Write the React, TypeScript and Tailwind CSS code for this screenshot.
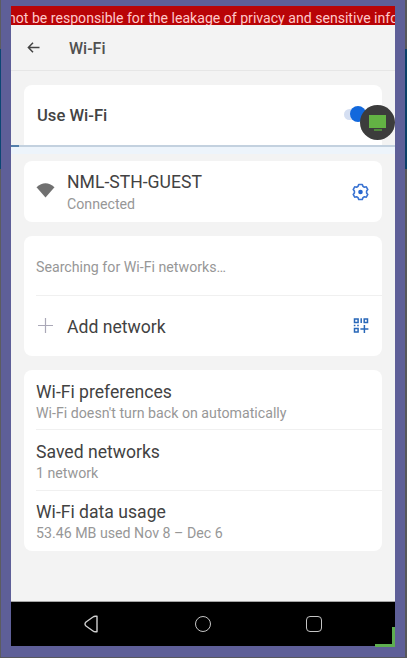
import type { ReactNode } from 'react';

function Text({ children, className }: { children: ReactNode; className: string }) {
  return <div className={`whitespace-nowrap ${className}`}>{children}</div>;
}

const title = 'text-[17.6px] leading-5 text-[#424242]';
const note = 'text-[14.2px] leading-4 text-[#979797]';

function BackArrow() {
  return (
    <svg className="h-4 w-4" viewBox="0 0 16 16" fill="none" stroke="#444" strokeWidth="1.5">
      <path d="M13.5 7.5H2.5M7 2.8 2.4 7.5 7 12.2" />
    </svg>
  );
}

function Gear() {
  return (
    <svg className="h-[18px] w-[18px]" viewBox="0 0 18 18" fill="none" stroke="#3a73d2" strokeWidth="1.6" strokeLinejoin="round">
      <path d="M7.7 1.5h3.600l.6 1.800 1.500.9 1.900-.4 1.500 2.800-1.200 1.400v2l1.200 1.400-1.500 2.800-1.900-.4-1.500.9-.6 1.800H7.700l-.6-1.800-1.500-.9-1.900.4-1.500-2.800L3.400 10V8L2.200 6.600l1.500-2.800 1.900.4 1.500-.9z" />
      <circle cx="9.500" cy="9" r="2.300" fill="#2867cf" stroke="none" />
    </svg>
  );
}

function QrAdd() {
  return (
    <svg className="h-4 w-4" viewBox="0 0 16 16" fill="none" stroke="#2867b8" strokeWidth="1.5">
      <path d="M1.500 1h3.600v3.600H1.500zM11.200 1h3.300v3.600h-3.300zM1.500 10.500h3.600v3.600H1.500zM8.200.300v4.800M11.400 6.900v8M7.400 10.900h8M.800 7.500h1.600M4.200 7.500h1.600" />
    </svg>
  );
}

export default function App() {
  return (
    <div className="relative h-[658px] w-[407px] overflow-hidden bg-[#5e5f98] font-[Roboto,sans-serif]">
      <div className="absolute left-0 top-0 h-full w-px bg-[#5c5c60]" />
      <div className="absolute right-0 top-0 h-full w-[2px] bg-[#57575b]" />
      <div className="absolute bottom-0 left-0 h-px w-full bg-[#57575f]" />
      <div className="absolute left-0 top-[49px] h-[120px] w-px bg-[#0c4673]" />
      <div className="absolute right-0 top-[49px] h-[120px] w-[2px] bg-[#0c4068]" />
      <div className="pl-[11px] pr-[12px] pt-[6px]">
        <main className="relative flex h-[640px] w-[384px] flex-col bg-[#f3f3f3]">
          <div className="h-[19px] shrink-0 overflow-hidden bg-[#b90407]">
            <Text className="-ml-[3px] pt-[3px] text-[14.1px] leading-[18px] text-[#ffc9c9]">
              not be responsible for the leakage of privacy and sensitive info
            </Text>
          </div>
          <header className="flex h-[46px] shrink-0 items-center border-b border-[#e6e6e6] pl-[15px]">
            <BackArrow />
            <Text className="ml-[27px] pt-[2px] text-[16px] font-medium leading-5 text-[#505050]">Wi-Fi</Text>
          </header>

          <section className="mx-[13px] mt-[14px] flex h-[60px] w-[358px] shrink-0 items-center justify-between rounded-t-lg bg-white pl-[13px] pr-[11px]">
            <Text className="pt-px text-[16.6px] font-medium leading-5 text-[#434343]">Use Wi-Fi</Text>
            <div className="mb-[2px] flex h-[11px] w-[27px] items-center rounded-full bg-[#d5dff2]">
              <div className="ml-[6px] h-4 w-4 shrink-0 rounded-full bg-[#1268dc]" />
            </div>
          </section>
          <div className="h-[2px] shrink-0 bg-[#c3d1df]">
            <div className="h-full w-2 bg-[#547fab]" />
          </div>
          <div className="h-[7px] shrink-0 bg-[#edf4fb]" />
          <div className="absolute left-[349px] top-[99px] flex h-[35px] w-[35px] flex-col items-center rounded-full bg-[#3c3c3c] pt-[10px]">
            <div className="h-[13px] w-[17px] bg-[#63b344]" />
            <div className="mt-px h-[2px] w-2 bg-[#4f873c]" />
          </div>

          <section className="mx-[13px] mt-[7px] flex h-[61px] w-[358px] shrink-0 items-center rounded-lg bg-white pl-3 pr-[13px]">
            <svg className="mb-[3px] h-[18px] w-[19px]" viewBox="0 0 19 18" fill="#707070">
              <path d="M.5 6.200Q9.500-1.500 18.500 6.200L9.500 16.500z" />
            </svg>
            <div className="ml-3 flex-1 pt-px">
              <Text className={title}>NML-STH-GUEST</Text>
              <Text className={`${note} mt-[4px]`}>Connected</Text>
            </div>
            <Gear />
          </section>

          <section className="mx-[13px] mt-[14px] flex h-[120px] w-[358px] shrink-0 flex-col rounded-lg bg-white pl-3">
            <div className="flex h-[60px] items-center border-b border-[#f0f0f0]">
              <Text className={`${note} pt-[3px]`}>Searching for Wi-Fi networks…</Text>
            </div>
            <div className="flex h-[60px] items-center pr-[13px]">
              <svg className="ml-[2px] h-4 w-4" viewBox="0 0 16 16" stroke="#aaa8b7" strokeWidth="1.200">
                <path d="M7.500 0v15M0 7.500h15" />
              </svg>
              <Text className={`${title} ml-[13px] flex-1 pt-[2px]`}>Add network</Text>
              <QrAdd />
            </div>
          </section>

          <section className="mx-[13px] mt-[14px] flex h-[181px] w-[358px] shrink-0 flex-col rounded-lg bg-white pl-3">
            <div className="h-[60px] border-b border-[#f0f0f0] pt-3">
              <Text className={title}>Wi-Fi preferences</Text>
              <Text className={`${note} mt-[3px]`}>Wi-Fi doesn't turn back on automatically</Text>
            </div>
            <div className="h-[61px] border-b border-[#f0f0f0] pt-3">
              <Text className={title}>Saved networks</Text>
              <Text className={`${note} mt-[3px]`}>1 network</Text>
            </div>
            <div className="h-[60px] pt-[11px]">
              <Text className={title}>Wi-Fi data usage</Text>
              <Text className={`${note} mt-[3px]`}>53.46 MB used Nov 8 – Dec 6</Text>
            </div>
          </section>

          <nav className="mt-auto flex h-[45px] shrink-0 items-center border-t border-[#a5a5a5] bg-black pl-[72px]">
            <svg className="h-[18px] w-[18px]" viewBox="0 0 18 18" fill="none" stroke="#d0d0d0" strokeWidth="1.400" strokeLinejoin="round">
              <path d="M2 9q0-1 1-2L10 2q1-.8 2.300-.8h1.700v15.600h-1.700q-1.300 0-2.300-.8L3 11q-1-1-1-2z" />
            </svg>
            <div className="ml-[94px] h-4 w-4 rounded-full border-[1.5px] border-[#c5c5c5]" />
            <div className="ml-[95px] h-4 w-4 rounded-[4px] border-[1.5px] border-[#c5c5c5]" />
          </nav>
        </main>
      </div>
      <div className="absolute left-[375px] top-[627px] h-5 w-5 border-b-[3px] border-r-[3px] border-[#5eae50]" />
    </div>
  );
}
